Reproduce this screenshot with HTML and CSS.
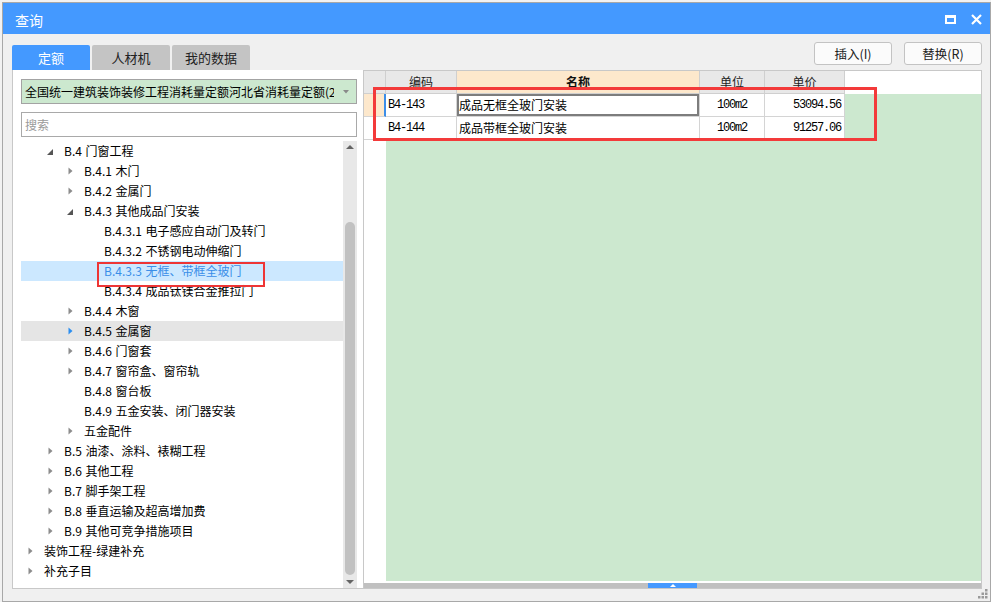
FILE: index.html
```html
<!DOCTYPE html>
<html lang="zh-CN">
<head>
<meta charset="utf-8">
<title>查询</title>
<link rel="stylesheet" href="styles.css">
</head>
<body>
<div class="window">
  <div class="titlebar">
    <span class="title">查询</span>
    <div class="title-actions">
      <svg class="ic-max" width="11" height="9" viewBox="0 0 11 9"><rect x="1" y="1.5" width="9" height="6.5" fill="none" stroke="#fff" stroke-width="2"/><rect x="0" y="0" width="11" height="3" fill="#fff"/></svg>
      <svg class="ic-close" width="11" height="11" viewBox="0 0 11 11"><path d="M1 1 L10 10 M10 1 L1 10" stroke="#fff" stroke-width="2.2" fill="none"/></svg>
    </div>
  </div>
  <div class="content">
    <div class="toprow">
      <div class="tabs">
        <div class="tab active">定额</div>
        <div class="tab">人材机</div>
        <div class="tab">我的数据</div>
      </div>
      <div class="buttons">
        <button class="btn">插入(I)</button>
        <button class="btn">替换(R)</button>
      </div>
    </div>
    <div class="main">
      <div class="left-panel">
        <div class="select">
          <span class="select-text">全国统一建筑装饰装修工程消耗量定额河北省消耗量定额(2015)</span>
          <svg class="select-arrow" width="6" height="4" viewBox="0 0 6 4"><path d="M0 0 L6 0 L3 3.5 Z"/></svg>
        </div>
        <div class="search">搜索</div>
        <div class="tree-wrap">
          <div class="tree">
            <div class="row l1"><span class="tw"><svg class="ex" width="6" height="6" viewBox="0 0 6 6"><path d="M6 0 L6 6 L0 6 Z"/></svg></span><span class="lbl">B.4 门窗工程</span></div>
            <div class="row l2"><span class="tw"><svg class="co" width="5" height="8" viewBox="0 0 5 8"><path d="M0.5 0.5 L4.5 4 L0.5 7.5 Z"/></svg></span><span class="lbl">B.4.1 木门</span></div>
            <div class="row l2"><span class="tw"><svg class="co" width="5" height="8" viewBox="0 0 5 8"><path d="M0.5 0.5 L4.5 4 L0.5 7.5 Z"/></svg></span><span class="lbl">B.4.2 金属门</span></div>
            <div class="row l2"><span class="tw"><svg class="ex" width="6" height="6" viewBox="0 0 6 6"><path d="M6 0 L6 6 L0 6 Z"/></svg></span><span class="lbl">B.4.3 其他成品门安装</span></div>
            <div class="row l3"><span class="tw"></span><span class="lbl">B.4.3.1 电子感应自动门及转门</span></div>
            <div class="row l3"><span class="tw"></span><span class="lbl">B.4.3.2 不锈钢电动伸缩门</span></div>
            <div class="row l3 selected"><span class="tw"></span><span class="lbl marked">B.4.3.3 无框、带框全玻门</span></div>
            <div class="row l3"><span class="tw"></span><span class="lbl">B.4.3.4 成品钛镁合金推拉门</span></div>
            <div class="row l2"><span class="tw"><svg class="co" width="5" height="8" viewBox="0 0 5 8"><path d="M0.5 0.5 L4.5 4 L0.5 7.5 Z"/></svg></span><span class="lbl">B.4.4 木窗</span></div>
            <div class="row l2 hover"><span class="tw"><svg class="co" width="5" height="8" viewBox="0 0 5 8"><path d="M0.5 0.5 L4.5 4 L0.5 7.5 Z"/></svg></span><span class="lbl">B.4.5 金属窗</span></div>
            <div class="row l2"><span class="tw"><svg class="co" width="5" height="8" viewBox="0 0 5 8"><path d="M0.5 0.5 L4.5 4 L0.5 7.5 Z"/></svg></span><span class="lbl">B.4.6 门窗套</span></div>
            <div class="row l2"><span class="tw"><svg class="co" width="5" height="8" viewBox="0 0 5 8"><path d="M0.5 0.5 L4.5 4 L0.5 7.5 Z"/></svg></span><span class="lbl">B.4.7 窗帘盒、窗帘轨</span></div>
            <div class="row l2"><span class="tw"></span><span class="lbl">B.4.8 窗台板</span></div>
            <div class="row l2"><span class="tw"></span><span class="lbl">B.4.9 五金安装、闭门器安装</span></div>
            <div class="row l2"><span class="tw"><svg class="co" width="5" height="8" viewBox="0 0 5 8"><path d="M0.5 0.5 L4.5 4 L0.5 7.5 Z"/></svg></span><span class="lbl">五金配件</span></div>
            <div class="row l1"><span class="tw"><svg class="co" width="5" height="8" viewBox="0 0 5 8"><path d="M0.5 0.5 L4.5 4 L0.5 7.5 Z"/></svg></span><span class="lbl">B.5 油漆、涂料、裱糊工程</span></div>
            <div class="row l1"><span class="tw"><svg class="co" width="5" height="8" viewBox="0 0 5 8"><path d="M0.5 0.5 L4.5 4 L0.5 7.5 Z"/></svg></span><span class="lbl">B.6 其他工程</span></div>
            <div class="row l1"><span class="tw"><svg class="co" width="5" height="8" viewBox="0 0 5 8"><path d="M0.5 0.5 L4.5 4 L0.5 7.5 Z"/></svg></span><span class="lbl">B.7 脚手架工程</span></div>
            <div class="row l1"><span class="tw"><svg class="co" width="5" height="8" viewBox="0 0 5 8"><path d="M0.5 0.5 L4.5 4 L0.5 7.5 Z"/></svg></span><span class="lbl">B.8 垂直运输及超高增加费</span></div>
            <div class="row l1"><span class="tw"><svg class="co" width="5" height="8" viewBox="0 0 5 8"><path d="M0.5 0.5 L4.5 4 L0.5 7.5 Z"/></svg></span><span class="lbl">B.9 其他可竞争措施项目</span></div>
            <div class="row l0"><span class="tw"><svg class="co" width="5" height="8" viewBox="0 0 5 8"><path d="M0.5 0.5 L4.5 4 L0.5 7.5 Z"/></svg></span><span class="lbl">装饰工程-绿建补充</span></div>
            <div class="row l0"><span class="tw"><svg class="co" width="5" height="8" viewBox="0 0 5 8"><path d="M0.5 0.5 L4.5 4 L0.5 7.5 Z"/></svg></span><span class="lbl">补充子目</span></div>
          </div>
          <div class="vscroll">
            <div class="vs-up"><svg width="8" height="4" viewBox="0 0 8 4"><path d="M4 0 L8 4 L0 4 Z"/></svg></div>
            <div class="vs-space"></div>
            <div class="vs-thumb"></div>
            <div class="vs-down"><svg width="8" height="4" viewBox="0 0 8 4"><path d="M0 0 L8 0 L4 4 Z"/></svg></div>
          </div>
        </div>
      </div>
      <div class="right-panel">
        <div class="table-area">
          <div class="rowhead-col">
            <div class="rh rh-head"></div>
            <div class="rh rh-cur">:</div>
            <div class="rh">:</div>
          </div>
          <div class="grid">
            <div class="grid-head">
              <div class="hc c-code">编码</div>
              <div class="hc c-name active">名称</div>
              <div class="hc c-unit">单位</div>
              <div class="hc c-price">单价</div>
            </div>
            <div class="grid-body">
              <div class="grow">
                <div class="cell c-code mono">B4-143</div>
                <div class="cell c-name focus">成品无框全玻门安装</div>
                <div class="cell c-unit mono center">100m2</div>
                <div class="cell c-price mono right">53094.56</div>
              </div>
              <div class="grow">
                <div class="cell c-code mono">B4-144</div>
                <div class="cell c-name">成品带框全玻门安装</div>
                <div class="cell c-unit mono center">100m2</div>
                <div class="cell c-price mono right">91257.06</div>
              </div>
            </div>
          </div>
        </div>
        <div class="hscroll">
          <div class="hs-bar">
            <div class="hs-thumb"><svg width="6" height="3" viewBox="0 0 6 3"><path d="M3 0 L6 3 L0 3 Z" fill="#fff"/></svg></div>
          </div>
        </div>
        <div class="red-box"></div>
      </div>
    </div>
  </div>
  <svg class="grip" width="10" height="10" viewBox="0 0 10 10"><rect x="7" y="0" width="2.5" height="2.5"/><rect x="3.5" y="3.5" width="2.5" height="2.5"/><rect x="7" y="3.5" width="2.5" height="2.5"/><rect x="0" y="7" width="2.5" height="2.5"/><rect x="3.5" y="7" width="2.5" height="2.5"/><rect x="7" y="7" width="2.5" height="2.5"/></svg>
</div>
</body>
</html>
```

FILE: styles.css
```css
* { box-sizing: border-box; }
html, body { margin: 0; padding: 0; }
body {
  width: 991px;
  height: 602px;
  overflow: hidden;
  background: #f2f2f2;
  font-family: "Noto Sans CJK SC", "Noto Sans", sans-serif;
  font-size: 12px;
  color: #000;
}
.window {
  position: relative;
  margin: 2px 0 0 2px;
  width: 989px;
  height: 600px;
  border: 1px solid #a8a8a8;
  background: #f0f0f0;
  display: flex;
  flex-direction: column;
}
.titlebar {
  flex: none;
  height: 31px;
  background: #4499ff;
  color: #fff;
  display: flex;
  align-items: center;
  justify-content: space-between;
  padding: 0 8px 0 12px;
}
.title { font-size: 14px; line-height: 20px; padding-top: 2px; }
.title-actions { display: flex; align-items: center; gap: 15px; padding-top: 2px; }
.content {
  flex: 1;
  display: flex;
  flex-direction: column;
  padding: 8px 8px 12px 9px;
  min-height: 0;
}
.toprow {
  flex: none;
  height: 28px;
  display: flex;
  justify-content: space-between;
}
.tabs { align-self: flex-end; display: flex; gap: 2px; }
.tab {
  width: 78px;
  height: 25px;
  line-height: 25px;
  text-align: center;
  background: #c4c4c4;
  color: #222;
  border-radius: 2px 2px 0 0;
  font-size: 13px;
}
.tab.active { background: #4499ff; color: #fff; }
.buttons { align-self: flex-start; display: flex; gap: 12px; }
.btn {
  width: 78px;
  height: 23px;
  padding: 0;
  background: #fbfbfb;
  border: 1px solid #c3c3c3;
  border-radius: 3px;
  font-family: inherit;
  font-size: 12.5px;
  color: #222;
}
.main { flex: 1; display: flex; min-height: 0; }
.left-panel {
  flex: none;
  width: 351px;
  background: #fff;
  border-left: 1px solid #c8c8c8;
  border-bottom: 1px solid #c8c8c8;
  padding: 9px 6px 0 8px;
  display: flex;
  flex-direction: column;
}
.select {
  flex: none;
  height: 25px;
  background: #cce8cf;
  border: 1px solid #a3a3a3;
  display: flex;
  align-items: center;
  padding: 0 7px 0 3px;
}
.select-text {
  flex: 1;
  white-space: nowrap;
  overflow: hidden;
  line-height: 22px;
  color: #000;
  margin-right: 9px;
}
.select-arrow { fill: #8a8a8a; }
.search {
  flex: none;
  margin-top: 8px;
  height: 25px;
  border: 1px solid #a9a9a9;
  color: #9a9a9a;
  line-height: 23px;
  padding-left: 3px;
}
.tree-wrap { flex: 1; margin-top: 4px; display: flex; min-height: 0; }
.tree { width: 322px; flex: none; }
.row {
  height: 20px;
  display: flex;
  align-items: center;
  white-space: nowrap;
}
.row.l1 { padding-left: 20px; }
.row.l2 { padding-left: 40px; }
.row.l3 { padding-left: 60px; }
.row.selected { background: #cce8ff; }
.row.hover { background: #e5e5e5; }
.tw {
  flex: none;
  width: 18px;
  height: 20px;
  display: flex;
  align-items: center;
  justify-content: center;
}
.tw .co { fill: #8c8c8c; }
.tw .ex { fill: #555; margin-top: 2px; }
.row.hover .tw .co { fill: #2b8ef0; }
.lbl { margin-left: 5px; line-height: 20px; color: #000; word-spacing: 1px; }
.selected .lbl { color: #3a8ee8; }
.marked { position: relative; }
.marked::after {
  content: "";
  position: absolute;
  left: -7px;
  top: 1px;
  width: 164px;
  height: 21px;
  border: 2px solid #ee3535;
}
.vscroll {
  flex: none;
  width: 14px;
  background: #e8e8e8;
  display: flex;
  flex-direction: column;
  align-items: center;
}
.vs-up { height: 14px; display: flex; align-items: center; justify-content: center; padding-bottom: 2px; }
.vs-up svg, .vs-down svg { fill: #646464; }
.vs-space { height: 67px; }
.vs-thumb { width: 10px; height: 353px; background: #c1c1c1; border-radius: 5px; }
.vs-down { height: 13px; display: flex; align-items: center; justify-content: center; }
.right-panel {
  flex: 1;
  position: relative;
  background: #fff;
  border: 1px solid #c8c8c8;
  display: flex;
  flex-direction: column;
}
.table-area { flex: 1; display: flex; min-height: 0; }
.rowhead-col { flex: none; width: 22px; background: #fff; }
.rh {
  height: 23px;
  border-bottom: 1px solid #d4d4d4;
  font-family: "Liberation Mono", monospace;
  font-weight: bold;
  font-size: 11px;
  line-height: 22px;
  padding-left: 7px;
  color: #222;
}
.rh-head { background: #e8e8e8; border-right: 1px solid #cfcfcf; border-bottom-color: #cfcfcf; }
.rh-cur { background: #fde8cc; border-right: 2px solid #3c8ee8; }
.grid { flex: 1; display: flex; flex-direction: column; }
.grid-head { flex: none; height: 23px; display: flex; background: #fff; }
.hc {
  height: 23px;
  background: #e8e8e8;
  border-right: 1px solid #cfcfcf;
  border-bottom: 1px solid #cfcfcf;
  text-align: center;
  line-height: 22px;
  color: #222;
}
.hc.active { background: #fde8cc; font-weight: bold; color: #111; }
.c-code { width: 71px; }
.c-name { width: 243px; }
.c-unit { width: 65px; }
.c-price { width: 80px; }
.grid-body { flex: 1; background: #cce8cf; }
.grow { display: flex; height: 23px; background: #fff; width: 459px; }
.cell {
  height: 23px;
  border-right: 1px solid #d4d4d4;
  border-bottom: 1px solid #d4d4d4;
  line-height: 22px;
  padding: 0 2px;
  white-space: nowrap;
  overflow: hidden;
  color: #000;
}
.cell.mono {
  font-family: "Liberation Mono", "DejaVu Sans Mono", monospace;
  font-size: 12px;
  letter-spacing: -1.2px;
}
.cell.center { text-align: center; }
.cell.right { text-align: right; padding-right: 3px; }
.cell.focus { box-shadow: inset 0 0 0 2px #7d7d7d; }
.hscroll { flex: none; height: 7px; padding-top: 2px; background: #fff; }
.hs-bar { height: 5px; background: #c0c0c0; display: flex; }
.hs-thumb {
  margin-left: 284px;
  width: 49px;
  height: 5px;
  background: #4499ff;
  display: flex;
  align-items: center;
  justify-content: center;
}
.red-box {
  position: absolute;
  left: 9px;
  top: 16px;
  width: 504px;
  height: 54px;
  border: 3px solid #f33a3a;
}
.grip {
  position: absolute;
  right: 2px;
  bottom: 2px;
  fill: #9a9a9a;
}
```
